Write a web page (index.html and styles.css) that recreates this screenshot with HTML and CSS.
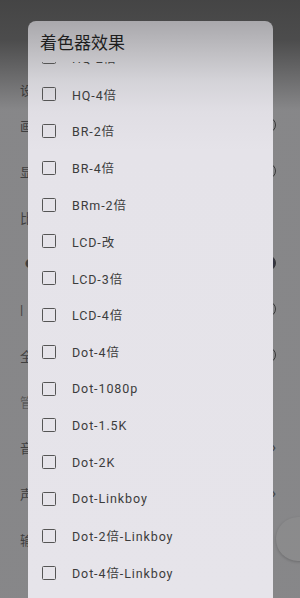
FILE: index.html
```html
<!DOCTYPE html>
<html lang="zh">
<head>
<meta charset="utf-8">
<link rel="stylesheet" href="styles.css">
</head>
<body>
<div class="screen">
  <div class="bg">
    <div class="bg-row r1"><span class="bg-label">设置</span></div>
    <div class="bg-row r2"><span class="bg-label">画面</span><span class="toggle"></span></div>
    <div class="bg-row r3"><span class="bg-label">显示</span><span class="toggle"></span></div>
    <div class="bg-row r4"><span class="bg-label">比例</span></div>
    <div class="bg-row r5"><span class="bg-label dot">●</span><span class="toggle on"></span></div>
    <div class="bg-row r6"><span class="bg-label">|</span><span class="toggle"></span></div>
    <div class="bg-row r7"><span class="bg-label">全屏</span><span class="toggle"></span></div>
    <div class="bg-row r8"><span class="bg-label muted">管理</span></div>
    <div class="bg-row r9"><span class="bg-label">音效</span><span class="bg-mark">›</span></div>
    <div class="bg-row r10"><span class="bg-label">声音</span><span class="bg-mark">›</span></div>
    <div class="bg-row r11"><span class="bg-label">输入</span><span class="fab"></span></div>
  </div>
  <div class="scrim"></div>
  <div class="dialog">
    <div class="title">着色器效果</div>
    <div class="list">
      <ul class="items">
        <li class="item"><span class="box"></span><span class="label">HQ-2倍</span></li>
        <li class="item"><span class="box"></span><span class="label">HQ-4倍</span></li>
        <li class="item"><span class="box"></span><span class="label">BR-2倍</span></li>
        <li class="item"><span class="box"></span><span class="label">BR-4倍</span></li>
        <li class="item"><span class="box"></span><span class="label">BRm-2倍</span></li>
        <li class="item"><span class="box"></span><span class="label">LCD-改</span></li>
        <li class="item"><span class="box"></span><span class="label">LCD-3倍</span></li>
        <li class="item"><span class="box"></span><span class="label">LCD-4倍</span></li>
        <li class="item"><span class="box"></span><span class="label">Dot-4倍</span></li>
        <li class="item"><span class="box"></span><span class="label">Dot-1080p</span></li>
        <li class="item"><span class="box"></span><span class="label">Dot-1.5K</span></li>
        <li class="item"><span class="box"></span><span class="label">Dot-2K</span></li>
        <li class="item"><span class="box"></span><span class="label">Dot-Linkboy</span></li>
        <li class="item"><span class="box"></span><span class="label">Dot-2倍-Linkboy</span></li>
        <li class="item"><span class="box"></span><span class="label">Dot-4倍-Linkboy</span></li>
      </ul>
    </div>
  </div>
</div>
</body>
</html>
```
FILE: styles.css
```css
* { box-sizing: border-box; }
html, body {
  margin: 0;
  padding: 0;
  width: 300px;
  height: 598px;
  overflow: hidden;
}
body {
  font-family: "Roboto", "Noto Sans CJK SC", sans-serif;
}
.screen {
  position: relative;
  width: 300px;
  height: 598px;
  overflow: hidden;
  background: #e8e8ea;
}
.bg {
  display: flex;
  flex-direction: column;
  padding-top: 76px;
}
.bg-row {
  height: 46px;
  display: flex;
  align-items: center;
  justify-content: space-between;
  padding: 0 0 0 20px;
  color: #333;
  font-size: 13px;
}
.bg-row.r1 { height: 26px; }
.bg-label.muted { color: #777; }
.bg-label.dot { font-size: 10px; padding-left: 5px; }
.toggle {
  width: 30px;
  height: 16px;
  border: 1.5px solid #222;
  border-radius: 9px;
  margin-right: 24px;
}
.toggle.on { background: #1a1a3a; }
.bg-mark { font-size: 14px; padding-right: 24px; color: #333; }
.fab {
  width: 44px;
  height: 44px;
  border-radius: 50%;
  background: #f2f2f2;
  margin-right: -20px;
  box-shadow: 0 1px 3px rgba(0,0,0,0.3);
}
.scrim {
  position: absolute;
  inset: 0;
  background: linear-gradient(to bottom, rgba(42,42,42,0.86) 0, rgba(42,42,42,0.82) 40px, rgba(70,70,72,0.6) 110px, rgba(70,70,72,0.6) 100%);
}
.dialog {
  position: absolute;
  top: 21px;
  left: 28px;
  width: 245px;
  bottom: 0;
  border-radius: 8px 8px 0 0;
  background: linear-gradient(to bottom, #a9a8ac 0, #bfbec2 30px, #d4d3d8 60px, #e0dee4 90px, #e5e3e9 130px, #e6e4ea 100%);
  display: flex;
  flex-direction: column;
  overflow: hidden;
}
.title {
  height: 41px;
  flex: none;
  padding: 9px 0 0 12px;
  font-family: "Noto Sans CJK SC", sans-serif;
  font-size: 17px;
  line-height: 24px;
  color: #1e1e1e;
}
.list {
  flex: 1;
  overflow: hidden;
}
.items {
  list-style: none;
  margin: -23px 0 0 0;
  padding: 0;
}
.item {
  height: 36.8px;
  display: flex;
  align-items: center;
  gap: 16px;
  padding-left: 14px;
}
.box {
  width: 14px;
  height: 14px;
  border: 1.5px solid #555;
  border-radius: 1.5px;
  flex: none;
}
.label {
  font-size: 12.5px;
  color: #3c3c3c;
  letter-spacing: 0.9px;
}
```
